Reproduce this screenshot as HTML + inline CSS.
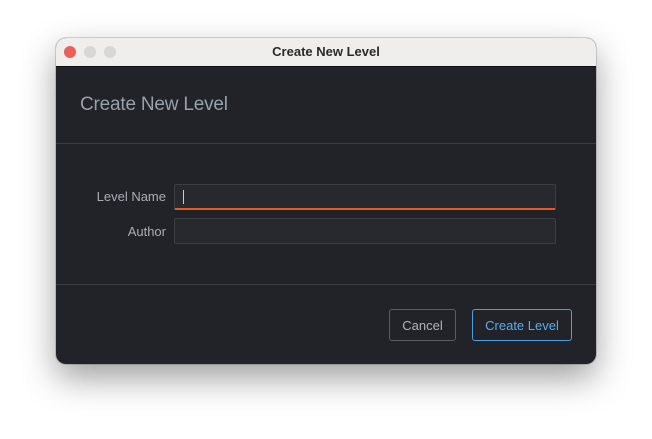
<!DOCTYPE html>
<html><head><style>
body{margin:0;width:652px;height:439px;background:#fff;font-family:"Liberation Sans",sans-serif;position:relative;overflow:hidden}
.win{position:absolute;left:56px;top:38px;width:540px;height:326px;border-radius:10px;background:#212328;overflow:hidden;box-shadow:0 14px 34px rgba(0,0,0,.38),0 0 0 1px rgba(0,0,0,.15)}
.tb{position:absolute;left:0;top:0;width:540px;height:28px;background:#efeeec;border-bottom:1px solid #111}
.dot{position:absolute;top:8px;width:12px;height:12px;border-radius:50%;background:#d8d7d5}
.tt{position:absolute;left:0;right:0;top:6px;text-align:center;font-size:13px;font-weight:bold;color:#2a2a2a}
.h{position:absolute;left:24px;top:56px;font-size:19px;color:#98a0aa;letter-spacing:-0.2px}
.sep{position:absolute;left:0;width:540px;height:1px;background:#3a3d43}
.lbl{position:absolute;right:430px;font-size:13px;color:#a8adb5}
.inp{position:absolute;left:118px;width:380px;height:24px;background:#27292e;border:1px solid #3a3d43;border-radius:2px}
.btn{position:absolute;top:271px;height:30px;border-radius:3px;font-size:13px;text-align:center;line-height:31px}
</style></head><body>
<div class="win">
<div class="tb"><div class="dot" style="left:8px;background:#ec5f56"></div><div class="dot" style="left:28px"></div><div class="dot" style="left:48px"></div><div class="tt">Create New Level</div></div>
<div class="h">Create New Level</div>
<div class="sep" style="top:105px"></div>
<div class="lbl" style="top:151px">Level Name</div>
<div class="inp" style="top:146px;border-bottom:2px solid #e65a28;height:23px"><div style="position:absolute;left:8px;top:5px;width:1px;height:14px;background:#ccc"></div></div>
<div class="lbl" style="top:186px">Author</div>
<div class="inp" style="top:180px"></div>
<div class="sep" style="top:246px"></div>
<div class="btn" style="left:333px;width:65px;border:1px solid #5a5d63;color:#b0b5bc">Cancel</div>
<div class="btn" style="left:416px;width:98px;border:1px solid #4a9fe0;color:#5aaeea">Create Level</div>
</div>
</body></html>
